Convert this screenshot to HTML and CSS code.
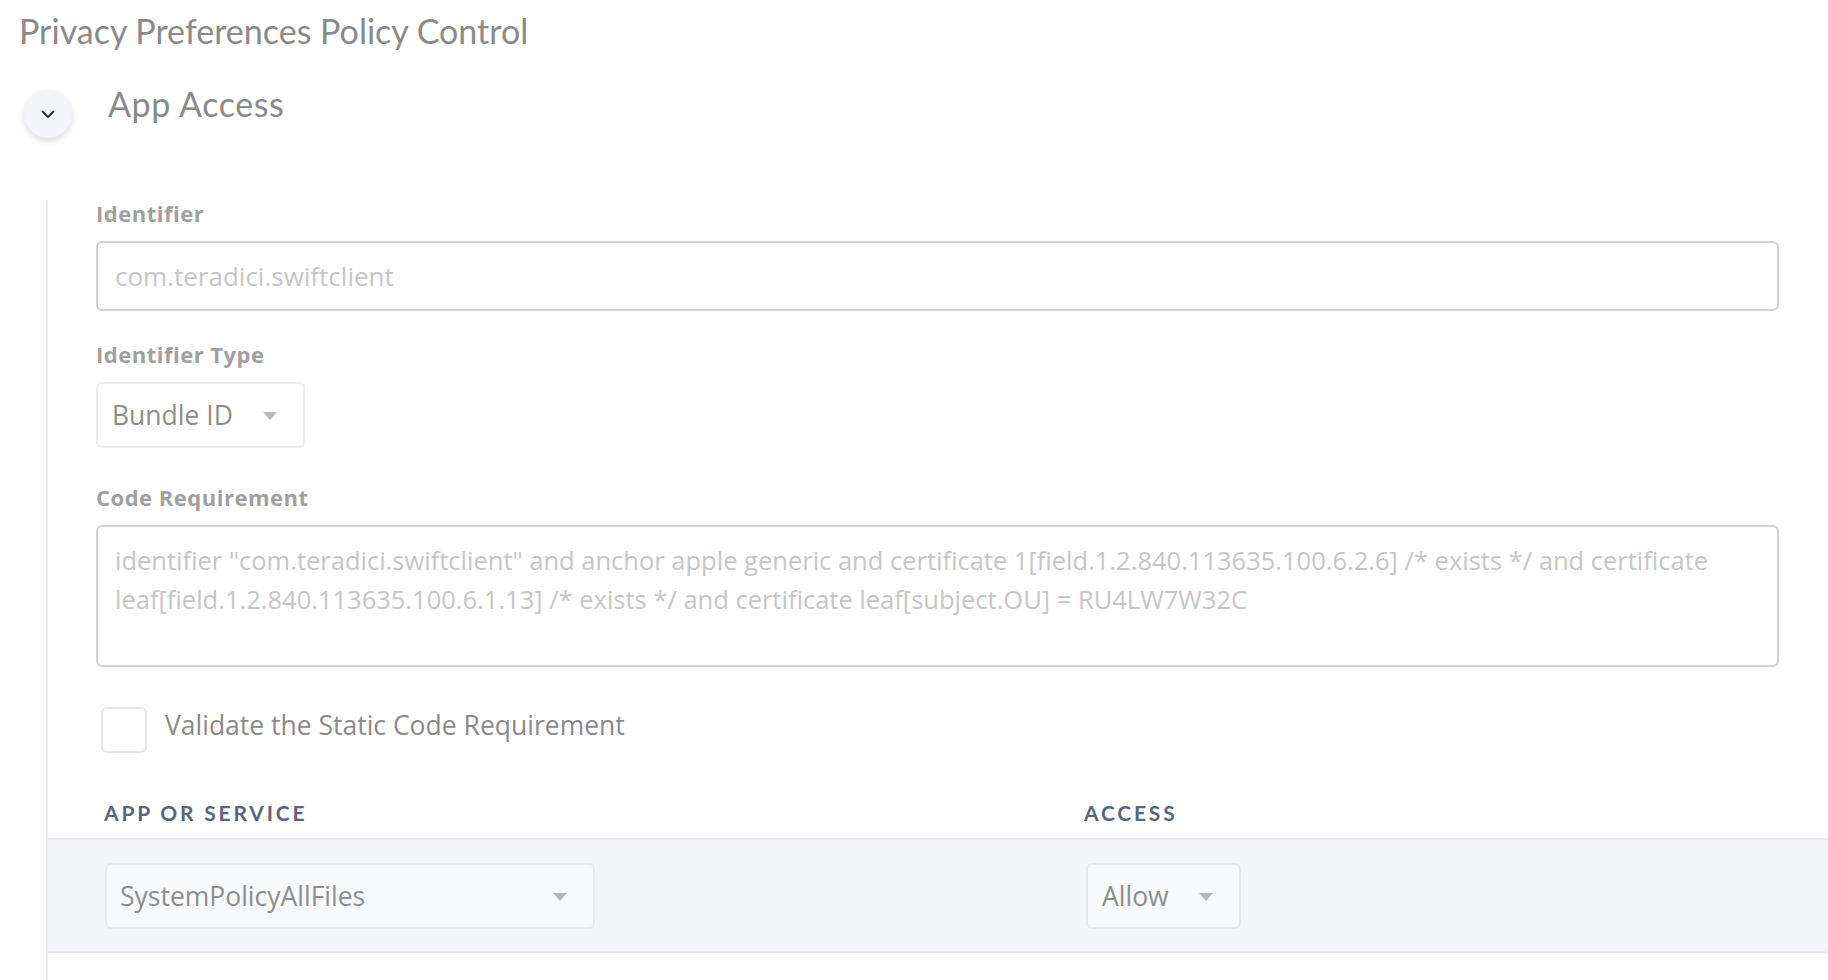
FILE: index.html
```html
<!DOCTYPE html>
<html lang="en">
<head>
    <meta charset="UTF-8">
    <meta name="viewport" content="width=device-width, initial-scale=1.0">
    <title>Privacy Preferences Policy Control</title>
    <link rel="stylesheet" href="styles.css">
</head>
<body>
    <h1 class="page-title">Privacy Preferences Policy Control</h1>

    <div class="section-head">
        <button class="toggle" type="button" aria-label="Collapse">
            <svg width="14" height="9" viewBox="0 0 14 9"><path d="M1.5 1.5 L7 7 L12.5 1.5" fill="none" stroke="#2b2b2b" stroke-width="1.8" stroke-linecap="round" stroke-linejoin="round"/></svg>
        </button>
        <h2 class="section-title">App Access</h2>
    </div>

    <div class="panel">
        <div class="fields">
            <label class="field-label">Identifier</label>
            <input class="text-input" type="text" placeholder="com.teradici.swiftclient">

            <label class="field-label label-type">Identifier Type</label>
            <div class="select select-small">
                <span>Bundle ID</span>
                <svg class="caret" width="14" height="8" viewBox="0 0 14 8"><path d="M0 0 H14 L7 8 Z"/></svg>
            </div>

            <label class="field-label label-code">Code Requirement</label>
            <textarea class="text-area" placeholder='identifier "com.teradici.swiftclient" and anchor apple generic and certificate 1[field.1.2.840.113635.100.6.2.6] /* exists */ and certificate leaf[field.1.2.840.113635.100.6.1.13] /* exists */ and certificate leaf[subject.OU] = RU4LW7W32C'></textarea>

            <label class="check-row">
                <span class="check-box"></span>
                <span class="check-text">Validate the Static Code Requirement</span>
            </label>
        </div>

        <div class="service-table">
            <div class="table-head">
                <div>App or Service</div>
                <div>Access</div>
            </div>
            <div class="table-row">
                <div class="select select-wide">
                    <span>SystemPolicyAllFiles</span>
                    <svg class="caret" width="14" height="8" viewBox="0 0 14 8"><path d="M0 0 H14 L7 8 Z"/></svg>
                </div>
                <div>
                    <div class="select select-small">
                        <span>Allow</span>
                        <svg class="caret" width="14" height="8" viewBox="0 0 14 8"><path d="M0 0 H14 L7 8 Z"/></svg>
                    </div>
                </div>
            </div>
        </div>
    </div>
</body>
</html>
```

FILE: styles.css
```css
body { margin: 0; background: #fff; font-family: "Open Sans", Lato, sans-serif; color: #8a8a8a; }

.page-title { margin: 0; padding: 11px 0 0 19px; font-family: Lato, sans-serif; font-size: 34px; line-height: 40px; font-weight: 400; color: #8a8a8a; }

.section-head { display: flex; align-items: flex-start; margin-top: 33px; }
.toggle { width: 48px; height: 48px; margin: 6px 0 0 24px; padding: 0; border: none; border-radius: 50%; background: #f4f5f8; box-shadow: 0 3px 6px rgba(0,0,0,0.14); display: flex; align-items: center; justify-content: center; cursor: pointer; }
.toggle svg { margin-top: 1px; }
.section-title { margin: 0 0 0 36px; font-family: Lato, sans-serif; font-size: 34px; line-height: 40px; font-weight: 400; color: #8a8a8a; letter-spacing: 0.6px; }

.panel { margin: 62px 0 0 46px; border-left: 2px solid #eceef1; padding-bottom: 40px; }

.fields { padding: 0 49px 0 48px; display: flex; flex-direction: column; align-items: flex-start; }
.field-label { display: block; font-size: 22px; line-height: 26px; font-weight: 700; letter-spacing: 0.5px; color: #a0a0a0; margin-bottom: 15px; }
.label-type { margin-top: 30px; }
.label-code { margin-top: 36px; }

.text-input, .text-area { box-sizing: border-box; width: 100%; border: 2px solid #d0d0d0; border-radius: 6px; font-family: inherit; color: #8a8a8a; background: #fff; outline: none; }
.text-input { height: 70px; padding: 0 17px; font-size: 26px; }
.text-area { height: 142px; padding: 14px 17px; font-size: 25.5px; line-height: 39px; resize: none; display: block; }
.text-input::placeholder, .text-area::placeholder { color: #c6c6c6; opacity: 1; }

.select { box-sizing: border-box; height: 66px; display: inline-flex; align-items: center; border: 2px solid #ececec; border-radius: 6px; background: #fff; font-size: 26.5px; color: #8e8e8e; }
.select-small { padding: 0 26px 0 14px; gap: 30px; }
.select-wide { width: 490px; padding: 0 26px 0 13px; justify-content: space-between; }
.caret { fill: #b3b8c2; margin-top: 2px; }

.check-row { display: flex; align-items: flex-start; margin: 40px 0 0 5px; cursor: pointer; }
.check-box { box-sizing: border-box; width: 46px; height: 46px; border: 2px solid #e6e6e6; border-radius: 6px; background: #fff; }
.check-text { margin: 3px 0 0 18px; font-size: 26.5px; line-height: 30px; color: #8a8a8a; }

.service-table { margin-top: 47px; }
.table-head { display: grid; grid-template-columns: 980px auto; padding-left: 56px; margin-bottom: 12px; font-family: Lato, sans-serif; font-size: 21px; line-height: 26px; font-weight: 700; letter-spacing: 2.8px; text-transform: uppercase; color: #5b6579; }
.table-row { display: grid; grid-template-columns: 981px auto; padding: 23px 0 22px 57px; background: #f4f5f8; border-top: 2px solid #e6e8ec; border-bottom: 2px solid #e6e8ec; }
.table-row .select { background: #f8f9fb; border-color: #e6e8eb; }
```
